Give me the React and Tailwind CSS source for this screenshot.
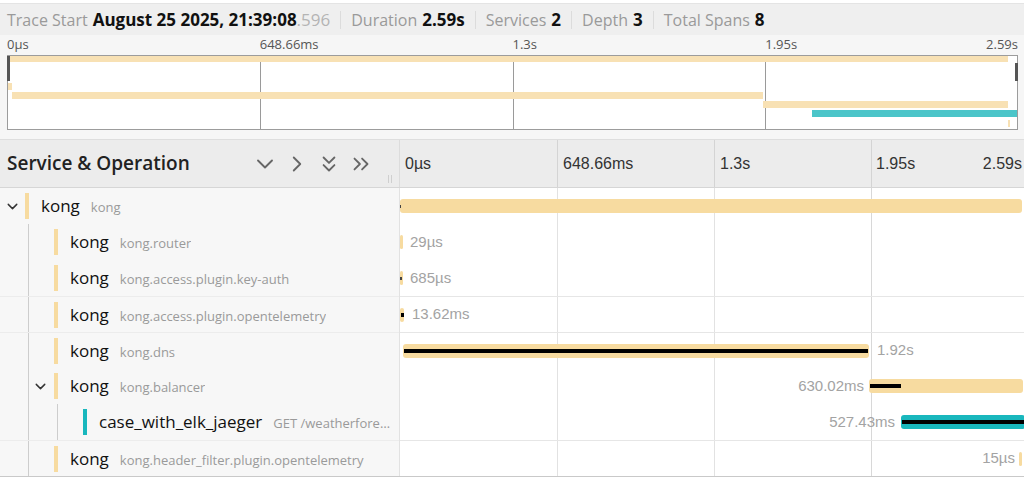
import React from "react";
import { ChevronDown, ChevronRight, ChevronsDown, ChevronsRight } from "lucide-react";

const SANS = { fontFamily: '"Open Sans", "Noto Sans", sans-serif' };

const rows = [
  { depth: 0, toggle: true, svc: "kong", op: "kong", color: "#f7dba0" },
  { depth: 1, svc: "kong", op: "kong.router", color: "#f7dba0" },
  { depth: 1, svc: "kong", op: "kong.access.plugin.key-auth", color: "#f7dba0" },
  { depth: 1, svc: "kong", op: "kong.access.plugin.opentelemetry", color: "#f7dba0", sep: true },
  { depth: 1, svc: "kong", op: "kong.dns", color: "#f7dba0", sep: true },
  { depth: 1, toggle: true, svc: "kong", op: "kong.balancer", color: "#f7dba0" },
  { depth: 2, svc: "case_with_elk_jaeger", op: "GET /weatherforecast", color: "#19b7bd" },
  { depth: 1, svc: "kong", op: "kong.header_filter.plugin.opentelemetry", color: "#f7dba0", sep: true },
];

function Sep() {
  return <span className="mx-[10px] h-[18px] w-px bg-[#dcdcdc]" />;
}

function TraceHeader() {
  return (
    <div className="flex h-[31px] items-center bg-[#efefef] px-[7px] text-[16px] text-[#9a9a9a]" style={SANS}>
      <span>Trace Start</span>
      <span className="ml-[5px] text-[17px] font-bold text-[#111]">August 25 2025, 21:39:08</span>
      <span className="text-[17px] text-[#b4b4b4]">.596</span>
      <Sep />
      <span>Duration</span>
      <span className="ml-[5px] text-[17px] font-bold text-[#111]">2.59s</span>
      <Sep />
      <span>Services</span>
      <span className="ml-[5px] text-[17px] font-bold text-[#111]">2</span>
      <Sep />
      <span>Depth</span>
      <span className="ml-[5px] text-[17px] font-bold text-[#111]">3</span>
      <Sep />
      <span>Total Spans</span>
      <span className="ml-[5px] text-[17px] font-bold text-[#111]">8</span>
    </div>
  );
}

function Minimap() {
  const W = 1011;
  return (
    <div className="h-[105px] border-b border-[#dedede] bg-[#f6f6f6] pl-[7px] pr-[6px]">
      <div className="flex h-[20px] items-center text-[13px] text-[#555]" style={SANS}>
        <div className="w-1/4">0µs</div>
        <div className="w-1/4">648.66ms</div>
        <div className="w-1/4">1.3s</div>
        <div className="flex w-1/4 justify-between">
          <span>1.95s</span>
          <span>2.59s</span>
        </div>
      </div>
      <svg width={W} height={75} className="block">
        <rect x="0" y="0" width={W} height="75" fill="#ffffff" />
        <line x1="253.5" y1="0" x2="253.5" y2="75" stroke="#9a9a9a" strokeWidth="1" />
        <line x1="506.5" y1="0" x2="506.5" y2="75" stroke="#9a9a9a" strokeWidth="1" />
        <line x1="758.5" y1="0" x2="758.5" y2="75" stroke="#9a9a9a" strokeWidth="1" />
        <rect x="1" y="1" width="1000" height="6" fill="#f8e1b4" />
        <rect x="1" y="10" width="2" height="6" fill="#f8e1b4" />
        <rect x="1" y="19" width="2" height="6" fill="#f8e1b4" />
        <rect x="1" y="28" width="4" height="7" fill="#f8e1b4" />
        <rect x="5" y="37" width="751" height="7" fill="#f8e1b4" />
        <rect x="756" y="46" width="245" height="7" fill="#f8e1b4" />
        <rect x="805" y="55" width="206" height="7" fill="#4bc5c9" />
        <rect x="1001" y="65" width="2" height="7" fill="#f8e1b4" />
        <rect x="0.5" y="0.5" width={W - 1} height="74" fill="none" stroke="#9c9c9c" strokeWidth="1" />
        <rect x="0" y="1" width="3" height="25" fill="#555" />
        <rect x="1008" y="8" width="3" height="18" fill="#555" />
      </svg>
    </div>
  );
}

function IconBtn({ children }) {
  return <span className="flex w-[32px] items-center justify-center text-[#666]">{children}</span>;
}

function TableHeader() {
  return (
    <div className="flex h-[48px] border-b border-[#d6d6d6] bg-[#ececec]">
      <div className="relative flex w-[400px] items-center border-r border-[#dcdcdc] pl-[7px] pr-[22px]" style={SANS}>
        <span className="flex-1 text-[19px] font-semibold text-[#222]">Service &amp; Operation</span>
        <IconBtn><ChevronDown size={28} strokeWidth={1.6} /></IconBtn>
        <IconBtn><ChevronRight size={26} strokeWidth={1.7} /></IconBtn>
        <IconBtn><ChevronsDown size={26} strokeWidth={1.7} /></IconBtn>
        <IconBtn><ChevronsRight size={26} strokeWidth={1.7} /></IconBtn>
        <span className="absolute bottom-[4px] right-[7px] flex h-[8px] gap-[2px]">
          <span className="w-px bg-[#cfcfcf]" />
          <span className="w-px bg-[#cfcfcf]" />
        </span>
      </div>
      <div
        className="flex flex-1 items-center text-[16px] text-[#333]"
        style={{ fontFamily: '"Liberation Sans", Arial, sans-serif' }}
      >
        <div className="flex h-full w-[157px] items-center pl-[5px]">0µs</div>
        <div className="flex h-full w-[157px] items-center border-l border-[#d4d4d4] pl-[5px]">648.66ms</div>
        <div className="flex h-full w-[157px] items-center border-l border-[#d4d4d4] pl-[5px]">1.3s</div>
        <div className="flex h-full flex-1 items-center justify-between border-l border-[#d4d4d4] pl-[4px] pr-[2px]">
          <span>1.95s</span>
          <span>2.59s</span>
        </div>
      </div>
    </div>
  );
}

function NameRow({ r }) {
  const guides = [];
  for (let i = 0; i < r.depth; i++) {
    guides.push(<span key={i} className="h-full w-[29px] shrink-0 border-r border-[#cdcdcd]" />);
  }
  return (
    <div className={`flex h-[36px] items-center ${r.sep ? "border-t border-[#ececec]" : ""}`}>
      {guides}
      <span className="flex h-full w-[25px] shrink-0 items-center justify-center text-[#333]">
        {r.toggle ? <ChevronDown size={17} strokeWidth={2} className={r.depth === 0 ? "-ml-[1px]" : "-ml-[3px]"} /> : null}
      </span>
      <span className="h-[26px] w-[4px] shrink-0" style={{ backgroundColor: r.color }} />
      <span className="ml-[12px] flex min-w-0 items-baseline pr-[4px]" style={SANS}>
        <span className="shrink-0 text-[17px] text-[#111]">{r.svc}</span>
        <span className="ml-[11px] truncate text-[13px] text-[#9a9a9a]">{r.op}</span>
      </span>
    </div>
  );
}

const ORANGE = "#f7dba0";
const TEAL = "#19b7bd";

function Bar({ left, width, color, crit }) {
  return (
    <>
      <div
        className="absolute top-[11px] h-[14px] rounded-[3px]"
        style={{ left, width, backgroundColor: color }}
      />
      {crit ? (
        <div className="absolute top-[16px] h-[4px] bg-black" style={{ left: crit[0], width: crit[1] }} />
      ) : null}
    </>
  );
}

function Label({ left, right, children }) {
  return (
    <span
      className="absolute top-0 flex h-full items-center text-[15px] text-[#a3a3a3]"
      style={{ left, right, fontFamily: '"Liberation Sans", Arial, sans-serif' }}
    >
      {children}
    </span>
  );
}

function TimelineRow({ i, sep }) {
  let content = null;
  switch (i) {
    case 0:
      content = (
        <>
          <Bar left={0} width={622} color={ORANGE} />
          <div className="absolute left-[-1px] top-[17px] h-[3px] w-[2px] bg-[#444]" />
        </>
      );
      break;
    case 1:
      content = (
        <>
          <Bar left={0} width={3} color={ORANGE} />
          <Label left={10}>29µs</Label>
        </>
      );
      break;
    case 2:
      content = (
        <>
          <Bar left={0} width={3} color={ORANGE} />
          <div className="absolute left-[0px] top-[17px] h-[3px] w-[2px] bg-[#444]" />
          <Label left={10}>685µs</Label>
        </>
      );
      break;
    case 3:
      content = (
        <>
          <Bar left={0} width={4} color={ORANGE} crit={[1, 3]} />
          <Label left={12}>13.62ms</Label>
        </>
      );
      break;
    case 4:
      content = (
        <>
          <Bar left={3} width={466} color={ORANGE} crit={[4, 464]} />
          <Label left={477}>1.92s</Label>
        </>
      );
      break;
    case 5:
      content = (
        <>
          <Bar left={469} width={154} color={ORANGE} crit={[470, 31]} />
          <Label right={160}>630.02ms</Label>
        </>
      );
      break;
    case 6:
      content = (
        <>
          <Bar left={501} width={124} color={TEAL} crit={[502, 123]} />
          <Label right={129}>527.43ms</Label>
        </>
      );
      break;
    case 7:
      content = (
        <>
          <Bar left={619} width={3} color={ORANGE} />
          <Label right={9}>15µs</Label>
        </>
      );
      break;
    default:
      break;
  }
  return <div className={`relative h-[36px] ${sep ? "border-t border-[#e6e6e6]" : ""}`}>{content}</div>;
}

export default function App() {
  return (
    <div className="h-[493px] w-[1024px] overflow-hidden bg-white">
      <div className="h-[4px] border-b border-[#e4e4e4] bg-white" />
      <TraceHeader />
      <Minimap />
      <TableHeader />
      <div className="flex border-b border-[#c9c9c9]">
        <div className="w-[400px] border-r border-[#e2e2e2] bg-[#f7f7f7]">
          {rows.map((r, i) => (
            <NameRow key={i} r={r} />
          ))}
        </div>
        <div className="relative flex-1 overflow-hidden bg-white">
          <div className="pointer-events-none absolute inset-y-0 left-[157px] w-px bg-[#e2e2e2]" />
          <div className="pointer-events-none absolute inset-y-0 left-[314px] w-px bg-[#e2e2e2]" />
          <div className="pointer-events-none absolute inset-y-0 left-[471px] w-px bg-[#d8d8d8]" />
          {rows.map((r, i) => (
            <TimelineRow key={i} i={i} sep={r.sep} />
          ))}
        </div>
      </div>
    </div>
  );
}
